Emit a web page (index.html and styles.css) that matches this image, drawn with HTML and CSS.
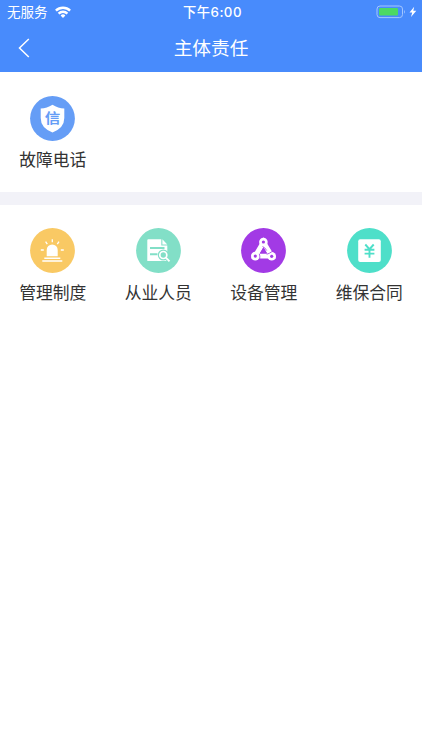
FILE: index.html
```
<!DOCTYPE html>
<html lang="zh-CN">
<head>
<meta charset="utf-8">
<title>主体责任</title>
<link rel="stylesheet" href="styles.css">
</head>
<body>
<header class="header">
  <div class="status">
    <div class="carrier">
      <span>无服务</span>
      <svg class="wifi" width="16" height="12" viewBox="0 0 16 12" fill="none" stroke="#fff" stroke-width="2.4">
        <path d="M.9 4.7a10 10 0 0 1 14.2 0"/>
        <path d="M3.6 7.7a6.1 6.1 0 0 1 8.8 0"/>
        <path d="M8 12 5.6 9.500a3.300 3.300 0 0 1 4.800 0Z" fill="#fff" stroke="none"/>
      </svg>
    </div>
    <div class="time">下午6:00</div>
    <div class="power">
      <svg width="42" height="14" viewBox="0 0 42 14">
        <rect x="1" y="1" width="25.500" height="11.600" rx="3" fill="none" stroke="#a3c6ff" stroke-width="1"/>
        <rect x="3" y="3" width="19" height="7.600" rx="1" fill="#4cd964"/>
        <path d="M28 4.800q1.800 2 0 4z" fill="#a3c6ff"/>
        <path d="M38.200 1.800 33.500 7.400h2.700L35 12 40.300 5.800h-3z" fill="#fff"/>
      </svg>
    </div>
  </div>
  <nav class="navbar">
    <svg class="back" width="12" height="20" viewBox="0 0 12 20" fill="none" stroke="#fff" stroke-width="1.500"><path d="M10.800 1 1.500 10l9.300 9"/></svg>
    <h1 class="title">主体责任</h1>
  </nav>
</header>
<main>
  <section class="grid">
    <a class="item">
      <svg class="icon" viewBox="0 0 45 45">
        <circle cx="22.500" cy="22.500" r="22.400" fill="#659df6"/>
        <path d="M22.500 8.700q5.500 3.600 11.800 3.800V22q0 10-11.800 14.400Q10.700 32 10.700 22V12.500Q17 12.300 22.500 8.700Z" fill="#fff"/>
        <text class="glyph" x="22.600" y="27" text-anchor="middle" textLength="15.500" lengthAdjust="spacingAndGlyphs">信</text>
      </svg>
      <span class="label">故障电话</span>
    </a>
  </section>
  <section class="grid second">
    <a class="item">
      <svg class="icon" viewBox="0 0 45 45">
        <circle cx="22.500" cy="22.500" r="22.400" fill="#f9c964"/>
        <path d="M16.700 28.300V22a5.500 5.500 0 0 1 11 0v6.300Z" fill="#fff"/>
        <path d="M14.300 30.200h16M12.300 33h20" stroke="#fff" stroke-width="1.600"/>
        <path d="M10.800 22h3M30.800 22h3M22.300 11.300v3M15.600 13.700l1.700 2.500M29 13.700l-1.700 2.500" stroke="#fff" stroke-width="1.300"/>
      </svg>
      <span class="label">管理制度</span>
    </a>
    <a class="item">
      <svg class="icon" viewBox="0 0 45 45">
        <circle cx="22.500" cy="22.500" r="22.400" fill="#82dfc7"/>
        <path d="M12.300 11.200H25.300v6.300h6v15.600h-20V12.200q0-1 1-1Z" fill="#fff"/>
        <path d="M26.400 11.300 31.300 16.400h-4.900Z" fill="#fff"/>
        <path d="M14 20h14.500M14 26.300h7.500" stroke="#82dfc7" stroke-width="1.900"/>
        <circle cx="27.300" cy="27" r="5.500" fill="#82dfc7"/>
        <path d="m29 29 5.500 5.300" stroke="#82dfc7" stroke-width="3.500"/>
        <circle cx="27.300" cy="27" r="3.500" fill="none" stroke="#fff" stroke-width="1.700"/>
        <path d="m29.900 29.700 3.600 3.600" stroke="#fff" stroke-width="1.900"/>
      </svg>
      <span class="label">从业人员</span>
    </a>
    <a class="item">
      <svg class="icon" viewBox="0 0 45 45">
        <circle cx="22.500" cy="22.500" r="22.400" fill="#a23ae5"/>
        <path d="M22.400 14.200 14.300 28H30.700Z" fill="none" stroke="#fff" stroke-width="5"/>
        <g fill="#fff">
          <circle cx="22.400" cy="14" r="4.300"/>
          <circle cx="14.300" cy="28.100" r="4.300"/>
          <circle cx="30.700" cy="28.300" r="4.300"/>
        </g>
        <path d="M21.500 18.500Q24 19.300 25.700 22.500M18.700 31.500Q19.200 27.500 18.300 25.800M25.700 26.300Q28.300 25.600 31 23.600" fill="none" stroke="#a23ae5" stroke-width=".8"/>
        <g fill="#a23ae5">
          <circle cx="22.400" cy="14" r="1.600"/>
          <circle cx="14.300" cy="28.100" r="1.600"/>
          <circle cx="30.700" cy="28.300" r="1.600"/>
          <path d="m22.400 19.600 3.500 6h-7Z"/>
        </g>
      </svg>
      <span class="label">设备管理</span>
    </a>
    <a class="item">
      <svg class="icon" viewBox="0 0 45 45">
        <circle cx="22.500" cy="22.500" r="22.400" fill="#4edfc9"/>
        <rect x="11.200" y="11.300" width="22.600" height="22.600" rx="2" fill="#fff"/>
        <path d="m18.300 16.500 4.200 4.700 4.200-4.700M22.500 21v8.700M17.600 21.800h9.800M17.600 25.600h9.800" fill="none" stroke="#4edfc9" stroke-width="1.900"/>
      </svg>
      <span class="label">维保合同</span>
    </a>
  </section>
</main>
</body>
</html>
```
FILE: styles.css
```
* { box-sizing: border-box; }
body {
  margin: 0;
  min-height: 750px;
  background: #fff;
  color: #333;
  font-family: "Liberation Sans", "Noto Sans CJK SC", sans-serif;
}
.header {
  height: 72px;
  background: #488bfc;
  color: #fff;
}
.status {
  display: grid;
  grid-template-columns: 1fr auto 1fr;
  grid-template-rows: 24px;
  height: 24px;
  padding: 0 4px 0 7px;
  align-items: center;
  font-size: 13.5px;
  line-height: 22px;
}
.carrier { display: flex; align-items: center; gap: 7px; }
.carrier span { padding-top: 2px; }
.time {
  font-family: Inter, "Noto Sans CJK SC", sans-serif;
  font-size: 13.3px;
  font-weight: 500;
  letter-spacing: .45px;
}
.power { display: flex; justify-content: flex-end; }
.navbar {
  display: grid;
  grid-template-columns: 1fr auto 1fr;
  align-items: center;
  height: 48px;
  padding: 0 18px;
}
.title {
  margin: 0;
  padding-top: 2px;
  font-size: 18.7px;
  font-weight: 400;
  line-height: 46px;
}
.grid {
  display: grid;
  grid-template-columns: repeat(4, 1fr);
  height: 120px;
  padding-top: 24px;
}
.second {
  height: auto;
  padding-top: 23px;
  border-top: 13px solid #f2f2f8;
}
.item { display: flex; flex-direction: column; align-items: center; }
.icon { width: 45px; height: 45px; }
.label { margin-top: 8px; font-size: 16.8px; line-height: 24px; }
.second .label { margin-top: 9px; }
.glyph {
  fill: #659df6;
  font-family: "Noto Sans CJK SC", sans-serif;
  font-size: 13.5px;
  font-weight: 700;
}
```
